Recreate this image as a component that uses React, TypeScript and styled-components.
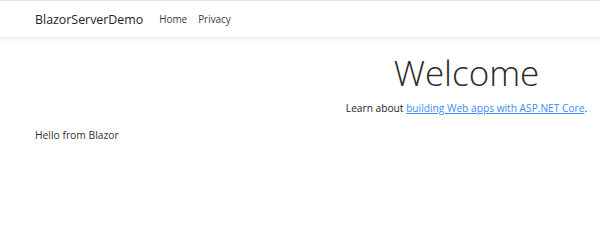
import React from "react";
import styled, { createGlobalStyle } from "styled-components";

const Global = createGlobalStyle`
  html, body { margin: 0; padding: 0; background: #fff; }
  body { font-family: "Open Sans", "Noto Sans", sans-serif; color: #212529; }
`;

const Page = styled.div`
  width: 600px;
  height: 243px;
  overflow: hidden;
  border-top: 1px solid #e3e3e3;
  box-sizing: border-box;
`;

const Navbar = styled.header`
  height: 36px;
  display: flex;
  align-items: center;
  padding: 0 35px;
  background: #fff;
  border-bottom: 1px solid #ececec;
  box-shadow: 0 2px 3px rgba(0, 0, 0, 0.05);
`;

const Brand = styled.a`
  font-size: 12.4px;
  color: #212529;
  text-decoration: none;
  margin-right: 16px;
`;

const NavLink = styled.a`
  font-size: 9.9px;
  color: #3a3a3a;
  text-decoration: none;
  margin-right: 11px;
`;

const Main = styled.main`
  padding: 0 35px;
`;

const Hero = styled.div`
  display: flex;
  flex-direction: column;
  align-items: center;
  margin-left: 298px;
  margin-right: -35px;
  padding-top: 12px;
`;

const Title = styled.h1`
  margin: 0;
  font-size: 35px;
  font-weight: 300;
  line-height: 46px;
  color: #2b2b2b;
`;

const Lead = styled.p`
  margin: 5px 0 0;
  font-size: 10.2px;
  color: #212529;
  white-space: nowrap;
`;

const Link = styled.a`
  color: #3b8cf5;
  text-decoration: underline;
`;

const Hello = styled.p`
  margin: 13px 0 0;
  font-size: 10.3px;
  color: #333;
`;

export default function App() {
  return (
    <Page>
      <Global />
      <Navbar>
        <Brand href="#">BlazorServerDemo</Brand>
        <NavLink href="#">Home</NavLink>
        <NavLink href="#">Privacy</NavLink>
      </Navbar>
      <Main>
        <Hero>
          <Title>Welcome</Title>
          <Lead>
            Learn about <Link href="#">building Web apps with ASP.NET Core</Link>.
          </Lead>
        </Hero>
        <Hello>Hello from Blazor</Hello>
      </Main>
    </Page>
  );
}
